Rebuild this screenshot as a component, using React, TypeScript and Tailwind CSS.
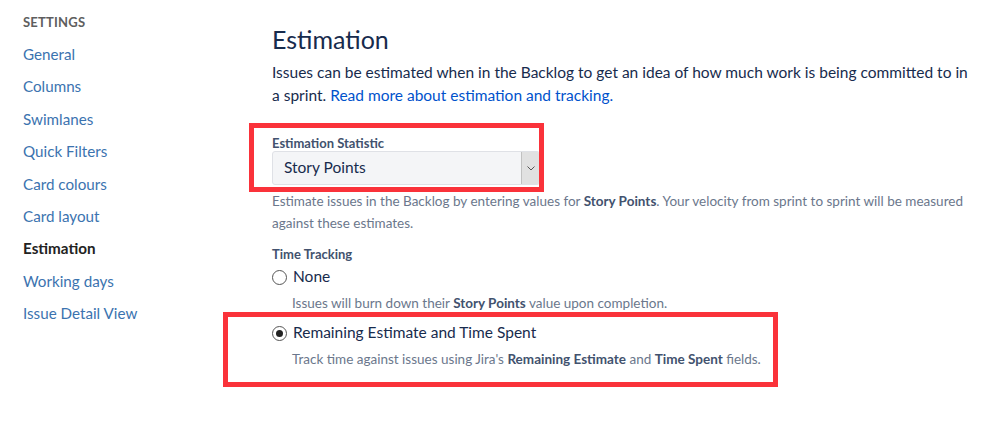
import React from "react";

const font = { fontFamily: 'Lato, "Noto Sans", Arial, sans-serif' };

const navItems = [
    "General",
    "Columns",
    "Swimlanes",
    "Quick Filters",
    "Card colours",
    "Card layout",
    "Estimation",
    "Working days",
    "Issue Detail View",
];

function Radio({ checked }: { checked?: boolean }) {
    return (
        <span className="flex h-[15px] w-[15px] items-center justify-center rounded-full border border-[#555] bg-white">
            {checked && <span className="h-[7px] w-[7px] rounded-full bg-[#222]" />}
        </span>
    );
}

export default function App() {
    return (
        <div className="flex h-[423px] w-[998px] bg-white text-[#172b4d]" style={font}>
            {/* Sidebar */}
            <aside className="w-[272px] shrink-0 pl-[23px] pt-[13px]">
                <div className="text-[13px] font-bold leading-[18px] tracking-[0.2px] text-[#5e5e5e]">SETTINGS</div>
                <ul className="mt-[7px]">
                    {navItems.map((item) =>
                        item === "Estimation" ? (
                            <li key={item} className="h-[32.4px] text-[15.2px] font-bold leading-[32.4px] text-[#222]">
                                {item}
                            </li>
                        ) : (
                            <li key={item} className="h-[32.4px] text-[15.2px] leading-[32.4px] text-[#3b73af]">
                                {item}
                            </li>
                        )
                    )}
                </ul>
            </aside>

            {/* Main */}
            <main className="flex-1 pt-[24px]">
                <h1 className="text-[25px] leading-[30px] text-[#172b4d]">Estimation</h1>
                <p className="mt-[7px] w-[698px] text-[15.5px] leading-[23px] text-[#172b4d]">
                    Issues can be estimated when in the Backlog to get an idea of how much work is being committed to in a sprint.{" "}
                    <span className="text-[#0052cc]">Read more about estimation and tracking.</span>
                </p>

                {/* Estimation statistic */}
                <div className="relative mt-[28px] w-[268px]">
                    <div className="pointer-events-none absolute -left-[23px] -top-[12px] h-[69px] w-[295px] border-[5px] border-[#fa323a]" />
                    <label className="block text-[13px] font-bold leading-[16px] text-[#42526e]">Estimation Statistic</label>
                    <div className="flex h-[34px] w-[268px] items-stretch overflow-hidden rounded-[3px] border border-[#dfe1e6] bg-[#f4f5f7]">
                        <span className="flex flex-1 items-center pl-[11px] text-[15.5px] text-[#172b4d]">Story Points</span>
                        <span className="flex w-[18px] items-center justify-center border-l border-[#c1c1c1] bg-[#e1e1e1]">
                            <svg width="8" height="5" viewBox="0 0 8 5" fill="none">
                                <path d="M0.5 0.5 L4 4 L7.5 0.5" stroke="#555" strokeWidth="1" />
                            </svg>
                        </span>
                    </div>
                </div>
                <p className="mt-[5px] w-[700px] text-[13.5px] leading-[22px] text-[#6b778c]">
                    Estimate issues in the Backlog by entering values for <b className="font-bold text-[#42526e]">Story Points</b>. Your velocity from sprint to sprint will be measured against these estimates.
                </p>

                {/* Time tracking */}
                <div className="mt-[11px] text-[13px] font-bold leading-[18px] text-[#42526e]">Time Tracking</div>
                <div className="mt-[2px] flex h-[24px] items-center gap-[6px]">
                    <Radio />
                    <span className="text-[15.5px] text-[#172b4d]">None</span>
                </div>
                <p className="mt-[4px] pl-[20px] text-[13.5px] leading-[20px] text-[#6b778c]">
                    Issues will burn down their <b className="font-bold text-[#42526e]">Story Points</b> value upon completion.
                </p>

                <div className="relative mt-[8px]">
                    <div className="pointer-events-none absolute -left-[49px] -top-[9px] h-[75px] w-[555px] border-[5px] border-[#fa323a]" />
                    <div className="flex h-[24px] items-center gap-[6px]">
                        <Radio checked />
                        <span className="text-[15.5px] text-[#172b4d]">Remaining Estimate and Time Spent</span>
                    </div>
                    <p className="mt-[4px] pl-[20px] text-[13.5px] leading-[20px] text-[#6b778c]">
                        Track time against issues using Jira's <b className="font-bold text-[#42526e]">Remaining Estimate</b> and{" "}
                        <b className="font-bold text-[#42526e]">Time Spent</b> fields.
                    </p>
                </div>
            </main>
        </div>
    );
}
